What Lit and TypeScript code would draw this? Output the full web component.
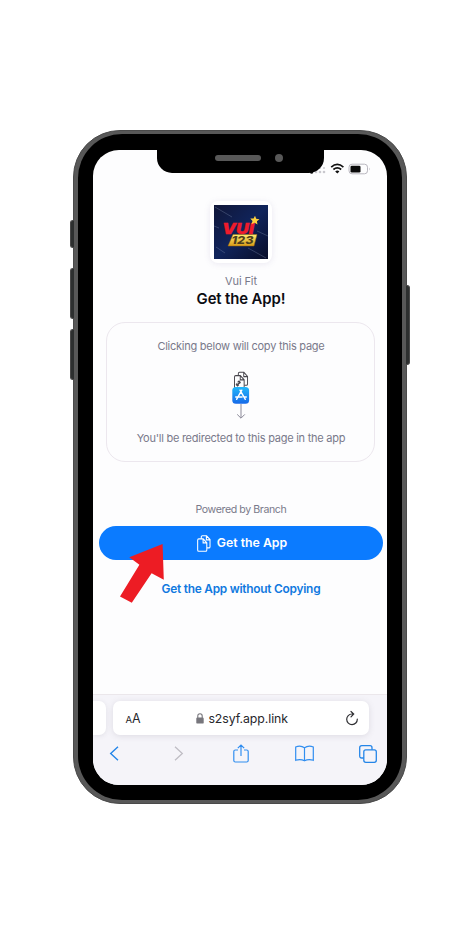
import { LitElement, html, css, svg } from "lit";
import { customElement } from "lit/decorators.js";

const docs = svg`
  <path d="M5.2 4V2.2Q5.2.8 6.6.8h5l4.2 4.1v7.5q0 1.3-1.4 1.3h-2.3M11.4.9v4.2h4.2"/>
  <path d="M.8 5.5Q.8 4.1 2.2 4.1h5.3l4.4 4.2v7.5q0 1.4-1.4 1.4H2.2q-1.4 0-1.4-1.4zM7.4 4.2v4.2h4.4"/>`;

@customElement("app-root")
export class AppRoot extends LitElement {
  static styles = css`
    :host { display: block; width: 470px; height: 950px; overflow: hidden; background: #fff; font-family: Inter, "Liberation Sans", sans-serif; }
    * { box-sizing: border-box; }
    svg { display: block; overflow: visible; fill: none; flex: none; }
    .stage { padding: 129.5px 0 0 73px; }
    .phone { position: relative; width: 334px; height: 674.3px; border-radius: 47px; background: #585858; padding: 3px 3.7px; border: .6px solid #4a4a4a; }
    .bezel { width: 100%; height: 100%; border-radius: 44px; background: #000; padding: 16.9px 15.7px; }
    .key { position: absolute; width: 4.4px; background: #2d2f2f; border: 1px solid #484848; }
    .key.l { left: -4.5px; border-radius: 3px 0 0 3px; border-right: 0; }
    .key.r { right: -4.3px; border-radius: 0 3px 3px 0; border-left: 0; }
    .k1 { top: 89px; height: 28px; }
    .k2 { top: 137px; height: 51px; }
    .k3 { top: 198px; height: 51px; }
    .k4 { top: 154px; height: 80px; }
    .screen { position: relative; width: 293.4px; height: 635px; border-radius: 26px; background: #fdfdfe; overflow: hidden; display: flex; flex-direction: column; }
    .notch { position: absolute; left: 63.5px; top: -1px; width: 167.4px; height: 23.4px; background: #000; border-radius: 0 0 15px 15px; }
    .speaker { position: absolute; left: 58px; top: 6px; width: 46px; height: 6px; border-radius: 3px; background: #585858; }
    .camera { position: absolute; left: 118px; top: 5px; width: 8px; height: 8px; border-radius: 50%; background: #585858; }
    .status { height: 50px; padding: 13px 15px 0 0; display: flex; justify-content: flex-end; align-items: flex-start; }
    .main { display: flex; flex-direction: column; align-items: center; height: 494px; padding-left: 1.8px; }
    .app { width: 62px; height: 62px; border-radius: 8px; padding: 4px; background: #fff; box-shadow: 0 1px 6px #7868a024; margin-top: 1px; }
    .t { white-space: nowrap; color: #79798a; line-height: 16px; height: 16px; }
    .name { font-size: 11px; letter-spacing: -.1px; margin-top: 10px; }
    .title { font-size: 14.9px; font-weight: 600; color: #0c0c12; margin-top: 2px; letter-spacing: -.12px; }
    .card { width: 269px; height: 140px; margin-top: 15px; border: 1px solid #ece7ee; border-radius: 19px; display: flex; flex-direction: column; align-items: center; padding-top: 15px; }
    .info { font-size: 11px; letter-spacing: -.25px; }
    .flow { margin: 17px 0 11px; }
    .powered { font-size: 10.6px; margin-top: 40px; letter-spacing: -.4px; }
    .cta { width: 284.5px; height: 34px; margin-top: 8px; border: 0; border-radius: 17px; background: #0b7bff; color: #fff; font: 600 12.3px/34px Inter, sans-serif; display: flex; align-items: center; justify-content: center; gap: 6px; padding: 0 0 0 2px; white-space: nowrap; }
    .alt { color: #1079df; font-size: 11.9px; font-weight: 600; margin-top: 21px; letter-spacing: -.25px; }
    .arrow { position: absolute; left: 45.6px; top: 413.6px; }
    .safari { height: 91px; background: #f5f4f9; border-top: 1px solid #ebe7eb; padding-top: 6px; }
    .bars { display: flex; gap: 7px; height: 34px; }
    .prev { width: 13px; background: #fff; border-radius: 0 7px 7px 0; box-shadow: 0 1px 5px #5550651f; }
    .url { width: 256px; background: #fff; border-radius: 7px; box-shadow: 0 1px 6px #55506526; display: flex; align-items: center; padding: 0 10px 0 12px; color: #27272b; white-space: nowrap; }
    .aa { font-size: 12.5px; width: 71px; }
    .aa small { font-size: 9.5px; }
    .host { font-size: 12.3px; letter-spacing: -.06px; margin-left: 4px; flex: 1; }
    .tools { height: 37px; display: grid; grid-template-columns: 65px 59px 62px 64px 18px; align-items: center; padding-left: 16px; }
  `;

  render() {
    return html`<div class="stage"><div class="phone">
      <span class="key l k1"></span><span class="key l k2"></span><span class="key l k3"></span><span class="key r k4"></span>
      <div class="bezel"><div class="screen">
        <div class="status">
          <svg width="62" height="12" viewBox="0 0 62 12">
            <g fill="#c9c8ce"><circle cx="6" cy="9" r="1.3"/><circle cx="10" cy="9" r="1.3"/><circle cx="14" cy="9" r="1.3"/><circle cx="10" cy="5" r="1"/><circle cx="14" cy="5" r="1"/></g>
            <circle cx="1.6" cy="9.3" r="1.5" fill="#111"/>
            <g stroke="#111" stroke-width="1.7"><path d="M21.2 4.1q6.1-5.4 12.2 0M23.4 6.5q3.9-3.3 7.8 0"/></g>
            <path d="M25.2 8.4q2.1-1.8 4.2 0l-2.1 2.2z" fill="#111"/>
            <rect x="39" y="1.2" width="18.5" height="9.6" rx="3" stroke="#b9b7bf"/><rect x="40.5" y="2.7" width="10" height="6.8" rx="1.3" fill="#090909"/><path d="M59 4.5q1.6 1.4 0 3z" fill="#b9b7bf"/>
          </svg>
        </div>
        <div class="main">
          <div class="app"><svg width="54" height="54" viewBox="0 0 54 54">
            <defs>
              <linearGradient id="n" x1="0" y1="0" x2="1" y2="1"><stop stop-color="#101638"/><stop offset=".5" stop-color="#10245b"/><stop offset="1" stop-color="#080d29"/></linearGradient>
              <linearGradient id="g" x1="0" y1="0" x2="0" y2="1"><stop stop-color="#ffed70"/><stop offset="1" stop-color="#d99b18"/></linearGradient>
            </defs>
            <rect width="54" height="54" fill="url(#n)"/>
            <path d="M1 2l17 10M0 21l5 2M34 43l18 10M43 26l11 5M2 42l9 6" stroke="#7583a5" stroke-width=".6" opacity=".65"/>
            <path d="M19 29.5h24L40 41H14z" fill="url(#g)" stroke="#9e6a0e" stroke-width=".5"/>
            <text x="8" y="28.8" font-size="15" font-weight="900" font-style="italic" font-family="Inter" textLength="32" lengthAdjust="spacingAndGlyphs" fill="#ee1b2b" stroke="#ee1b2b" stroke-width=".3">VUI</text>
            <text x="17.5" y="39.1" font-size="10.5" font-weight="800" font-style="italic" font-family="Inter" textLength="22" lengthAdjust="spacingAndGlyphs" fill="#4d401c">123</text>
            <path d="M41 10.8l1.2 3 3.3.4-2.6 2 .6 3.4-2.9-1.9-3.1 1.5 1-3.3-2.2-2.5h3.3z" fill="#ffd13d"/>
          </svg></div>
          <div class="t name">Vui Fit</div>
          <div class="t title">Get the App!</div>
          <div class="card">
            <div class="t info">Clicking below will copy this page</div>
            <svg class="flow" width="18" height="48" viewBox="0 0 18 48">
              <defs><linearGradient id="s" x1="0" y1="0" x2="0" y2="1"><stop stop-color="#20b7fb"/><stop offset="1" stop-color="#1769e8"/></linearGradient></defs>
              <g transform="translate(1.8 .5) scale(.87 1)" stroke="#48464d" stroke-width="1.1">${docs}<path d="M4 13.5l3-3m-2.6.2 1.6-1.2 1.5 1.3-1 1.4m-.6 1-1.5 1.3-1.6-1.3 1-1.5"/></g>
              <rect x=".3" y="16" width="16.8" height="16.8" rx="3.6" fill="url(#s)"/>
              <path d="M9.8 19.2l-5.2 9.1M8 19.2l5.3 9.1M3.7 26h6.4m2 0h2.2" stroke="#fff" stroke-width="1.4" stroke-linecap="round"/>
              <path d="M9 33v14M5.2 43.4L9 47.2l3.8-3.8" stroke="#8b8998" stroke-width="1"/>
            </svg>
            <div class="t info">You'll be redirected to this page in the app</div>
          </div>
          <div class="t powered">Powered by Branch</div>
          <button class="cta"><svg width="14" height="17" viewBox="0 0 17 18" preserveAspectRatio="none" stroke="#fff" stroke-width="1.3">${docs}</svg><span>Get the App</span></button>
          <div class="t alt">Get the App without Copying</div>
        </div>
        <div class="safari">
          <div class="bars"><div class="prev"></div><div class="url">
            <span class="aa"><small>A</small>A</span>
            <svg width="8" height="11" viewBox="0 0 8 11"><path d="M1.8 5V3Q1.8.7 4 .7T6.2 3v2" stroke="#77767c" stroke-width="1.1"/><rect x=".3" y="4.6" width="7.4" height="6" rx="1.2" fill="#77767c"/></svg>
            <span class="host">s2syf.app.link</span>
            <svg width="14" height="15" viewBox="0 0 14 15" stroke="#303034" stroke-width="1.2" stroke-linecap="round"><path d="M12.3 8.2A5.3 5.3 0 1 1 7 3h1.3M6 .5L8.7 3 6 5.8"/></svg>
          </div></div>
          <div class="tools">
            <svg width="10" height="15" viewBox="0 0 10 15" stroke="#2485e8" stroke-width="1.4"><path d="M9 .8L1.7 7.5 9 14.2"/></svg>
            <svg width="10" height="15" viewBox="0 0 10 15" stroke="#bfbdc4" stroke-width="1.3"><path d="M1 .8l7.3 6.7L1 14.2"/></svg>
            <svg width="16" height="19" viewBox="0 0 16 19" stroke="#318ef0" stroke-width="1.2"><path d="M5 6H2.3Q.8 6 .8 7.5v9q0 1.5 1.5 1.5h11.4q1.5 0 1.5-1.5v-9Q15.2 6 13.7 6H11M8 12V1M4.8 4.2L8 1l3.2 3.2"/></svg>
            <svg width="19" height="17" viewBox="0 0 19 17" stroke="#318ef0" stroke-width="1.2"><path d="M9.5 2.8Q5.5-.2.7 2v13.3q4.7-1.7 8.8.5 4.1-2.2 8.8-.5V2q-4.8-2.2-8.8.8zM9.5 2.8v13"/></svg>
            <svg width="18" height="18" viewBox="0 0 18 18" stroke="#2485e8" stroke-width="1.3"><rect x="4.8" y="4.8" width="12.5" height="12.5" rx="2"/><path d="M4.8 13H2.7q-2 0-2-2V2.7q0-2 2-2H11q2 0 2 2v2.1"/></svg>
          </div>
        </div>
        <div class="notch"><span class="speaker"></span><span class="camera"></span></div>
      </div></div>
      <svg class="arrow" width="44" height="60" viewBox="0 0 44 60"><path d="M42.6 0L9.3 13.2l10.1 7.6L0 52.4l11.8 6.4 19.8-29.6 12.2 6.6z" fill="#ed1c24"/></svg>
    </div></div>`;
  }
}
